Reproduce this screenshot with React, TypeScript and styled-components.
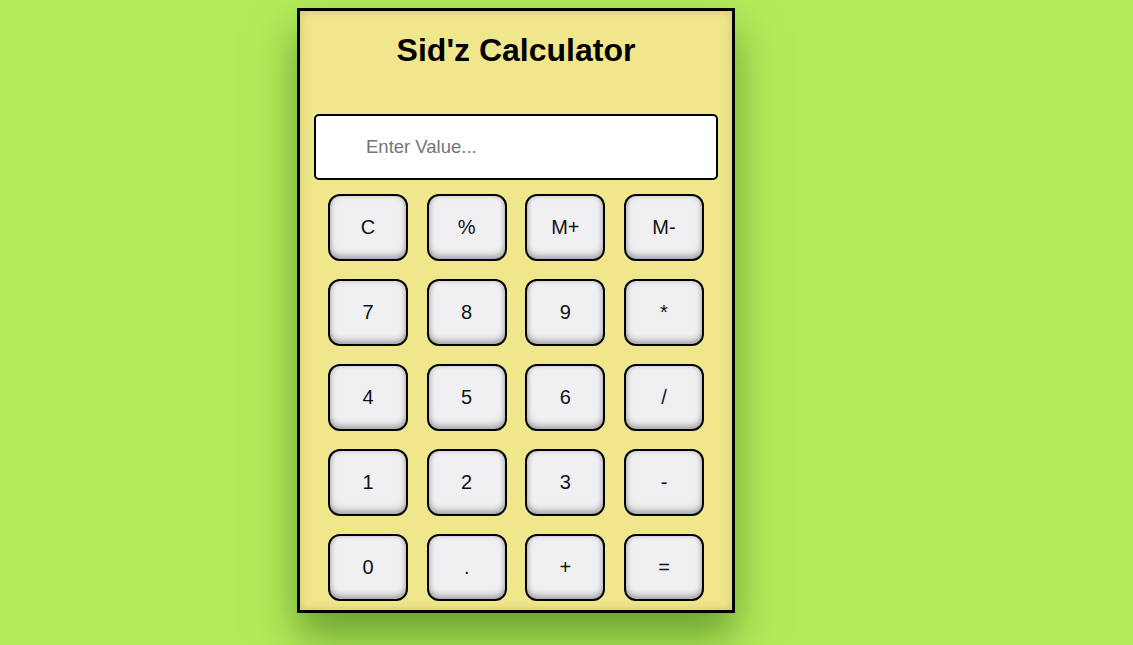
import React from "react";
import styled, { createGlobalStyle } from "styled-components";

const Global = createGlobalStyle`
  html, body { margin: 0; padding: 0; }
  body {
    background: #b3eb5b;
    font-family: "Liberation Sans", Arial, sans-serif;
    min-height: 645px;
    overflow: hidden;
  }
`;

const Page = styled.div`
  padding: 8px 0 0 297px;
`;

const Calculator = styled.div`
  box-sizing: border-box;
  width: 438px;
  height: 605px;
  border: 3px solid #000;
  background: #f0e68c;
  box-shadow: 0 24px 40px rgba(60, 110, 20, 0.6), inset 0 0 10px rgba(120, 100, 20, 0.25);
  display: flex;
  flex-direction: column;
  align-items: center;
`;

const Title = styled.h1`
  margin: 21px 0 0;
  font-size: 32px;
  line-height: 37px;
  font-weight: bold;
  color: #000;
`;

const Display = styled.input`
  box-sizing: border-box;
  margin-top: 45px;
  width: 404px;
  height: 66px;
  border: 2px solid #000;
  border-radius: 5px;
  background: #fff;
  padding: 0 0 0 50px;
  font-family: "Liberation Sans", Arial, sans-serif;
  font-size: 18.5px;
  outline: none;
  &::placeholder { color: #757575; }
`;

const Keys = styled.div`
  margin-top: 14px;
  display: grid;
  grid-template-columns: repeat(4, 80px);
  grid-auto-rows: 67px;
  column-gap: 18.67px;
  row-gap: 18px;
`;

const Key = styled.button`
  box-sizing: border-box;
  border: 2px solid #000;
  border-radius: 12px;
  background: #f0f0f2;
  box-shadow: inset 0 -4px 6px rgba(0, 0, 0, 0.25), inset 0 0 5px rgba(0, 0, 0, 0.18);
  font-family: "Liberation Sans", Arial, sans-serif;
  font-size: 20px;
  color: #111;
  padding: 0;
  cursor: pointer;
`;

const keys = ["C", "%", "M+", "M-", "7", "8", "9", "*", "4", "5", "6", "/", "1", "2", "3", "-", "0", ".", "+", "="];

export default function App() {
  return (
    <>
      <Global />
      <Page>
        <Calculator>
          <Title>Sid'z Calculator</Title>
          <Display type="text" placeholder="Enter Value..." />
          <Keys>
            {keys.map((k) => (
              <Key key={k}>{k}</Key>
            ))}
          </Keys>
        </Calculator>
      </Page>
    </>
  );
}
